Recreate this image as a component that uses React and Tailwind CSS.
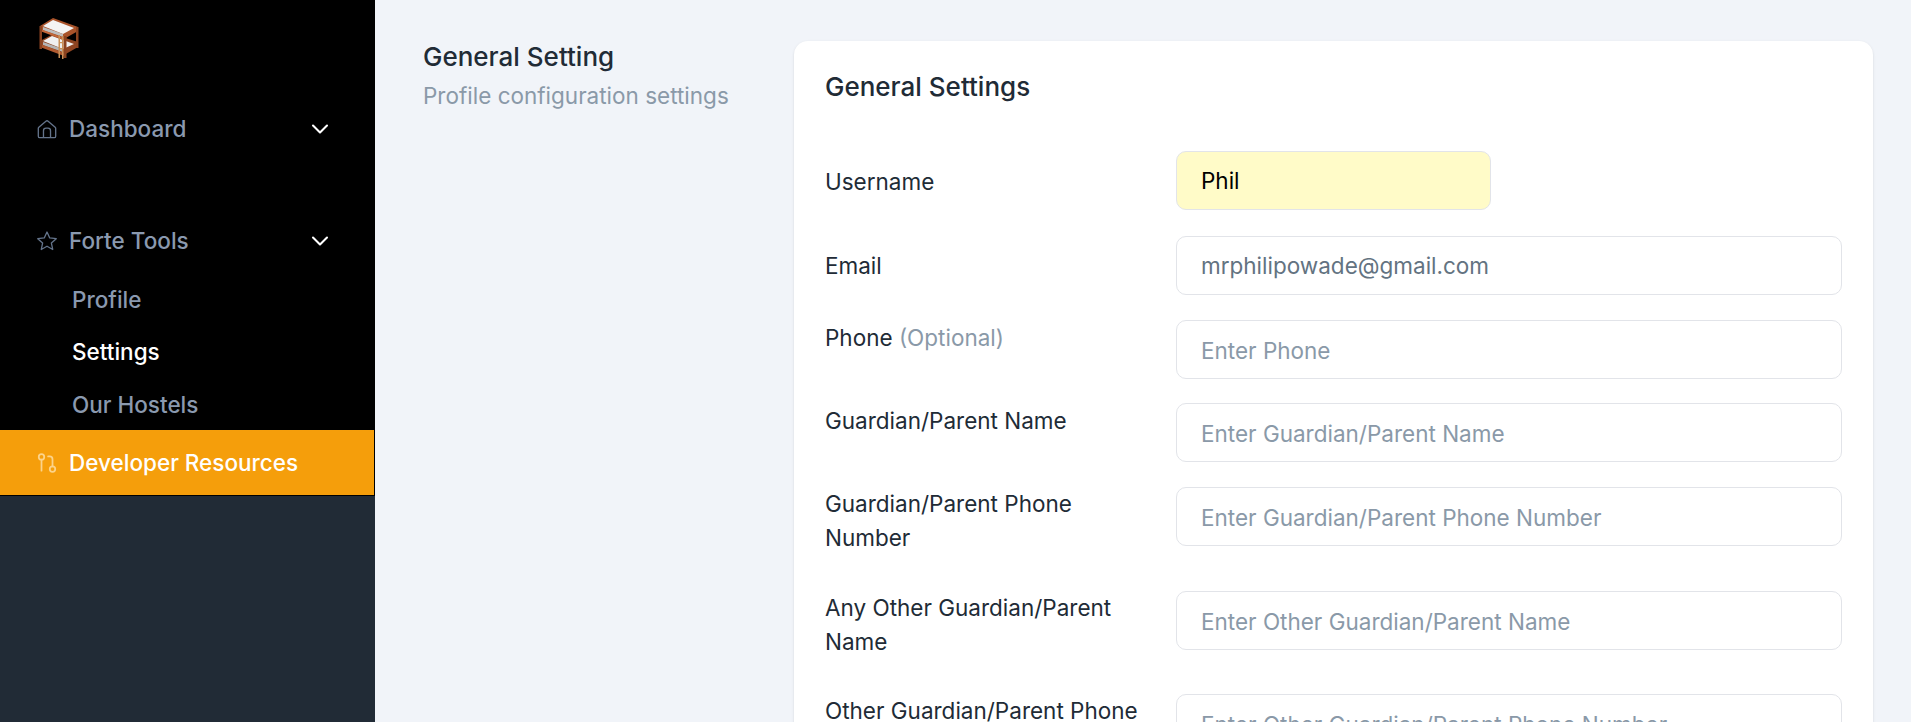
import { ChevronDown } from 'lucide-react'

const font = { fontFamily: 'Inter, sans-serif' }

function HomeIcon() {
  return (
    <svg viewBox="0 0 20 20" className="w-[22px] h-[22px] shrink-0" fill="none" stroke="currentColor" strokeWidth="1.2">
      <path d="M2.600 8.400 9 2.900c.6-.5 1.400-.5 2 0l6.400 5.500c.3.300.5.600.5 1v7.100c0 .8-.6 1.400-1.400 1.400H3.500c-.8 0-1.400-.6-1.400-1.400V9.400c0-.4.200-.7.500-1Z" />
      <path d="M6.800 17.900v-6.400c0-1.300 1-2.300 2.300-2.300h1.800c1.300 0 2.300 1 2.300 2.300v6.400" />
    </svg>
  )
}

function StarIcon() {
  return (
    <svg viewBox="0 0 20 20" className="w-[22px] h-[22px] shrink-0" fill="none" stroke="currentColor" strokeWidth="1.200" strokeLinejoin="round">
      <path d="m10 1.800 2.500 5.400 5.900.7-4.400 4 1.200 5.800L10 14.800l-5.200 2.900L6 11.900l-4.400-4 5.900-.7L10 1.800Z" />
    </svg>
  )
}

function BranchIcon() {
  return (
    <svg viewBox="0 0 20 20" className="w-[22px] h-[22px] shrink-0" fill="none" stroke="currentColor" strokeWidth="1.600" strokeLinecap="round" strokeLinejoin="round">
      <circle cx="5" cy="4.500" r="2.500" />
      <path d="M5 7v10" />
      <circle cx="15" cy="15.500" r="2.500" />
      <path d="M15 13V6.500C15 5.100 14 4 12.500 4H11" />
    </svg>
  )
}

function BunkBed() {
  return (
    <svg viewBox="0 0 48 48" className="w-[48px] h-[48px]">
      {/* back posts and rims */}
      <path d="M4 12 17 4 42 13 42 17 28 25 4 16Z" fill="#a9532a" />
      <path d="M4 27 17 20 42 28 42 33 28 41 4 32Z" fill="#8f4522" />
      {/* mattresses */}
      <path d="M7 12 17 6 38 14 27 20Z" fill="#f4f4f4" />
      <path d="M7 13 27 20 27 23 7 16Z" fill="#bdbdbd" />
      <path d="M7 27 16 22 38 30 27 35Z" fill="#f0f0f0" />
      <path d="M7 28 27 35 27 38 7 31Z" fill="#b5b5b5" />
      {/* front rims */}
      <path d="M4 15 28 24 28 26 4 17Z" fill="#c4683a" />
      <path d="M4 30 28 39 28 42 4 33Z" fill="#b05a30" />
      {/* posts */}
      <path d="M3.500 12H6V35H3.500ZM40 13H42.500V34H40ZM27.500 22H30.500V44H27.500Z" fill="#8b4320" />
      {/* ladder */}
      <path d="M22.500 21H24V44H22.500ZM26 22H27.500V45H26ZM22.500 28H27V29.200H22.500ZM22.500 34H27V35.200H22.500Z" fill="#c99058" />
    </svg>
  )
}

function Field({ label, optional, value, placeholder, short, center, pt = '', mb }) {
  return (
    <div className={`flex ${center ? 'items-center' : 'items-start'} ${mb}`}>
      <label className={`w-[351px] shrink-0 ${pt} pr-[30px] text-[22.500px] leading-[34px] text-[#212b36]`}>
        {label} {optional && <span className="text-[#8a99a8]">{optional}</span>}
      </label>
      <input
        readOnly
        value={value}
        placeholder={placeholder}
        className={`${short ? 'w-[315px] bg-[#fffbc8] text-black' : 'w-[666px] bg-white text-[#637381]'} ${placeholder ? 'pt-[2px]' : ''} h-[59px] px-[24px] rounded-[10px] border border-[#e2e4e9] text-[22.500px] outline-none placeholder:text-[#8a99a8]`}
      />
    </div>
  )
}

export default function App() {
  return (
    <div className="flex h-screen overflow-hidden bg-[#f1f4f9]" style={font}>
      <aside className="w-[375px] shrink-0 bg-[#212b36] flex flex-col">
        <div className="bg-black h-[430px] pt-[14px]">
          <div className="pl-[36px] h-[48px]"><BunkBed /></div>
          <div className="mt-[47px] flex items-center justify-between pl-[36px] pr-[41px] h-[40px] text-[#8a99af] text-[22.500px]">
            <span className="flex items-center gap-[11px] font-medium"><span className="text-[#64748b]"><HomeIcon /></span>Dashboard</span>
            <ChevronDown strokeWidth={1.8} className="w-[28px] h-[28px] text-white" />
          </div>
          <div className="mt-[72px] flex items-center justify-between pl-[36px] pr-[41px] h-[40px] text-[#8a99af] text-[22.500px]">
            <span className="flex items-center gap-[11px] font-medium"><span className="text-[#64748b]"><StarIcon /></span>Forte Tools</span>
            <ChevronDown strokeWidth={1.8} className="w-[28px] h-[28px] text-white" />
          </div>
          <ul className="mt-[13px] pl-[72px] text-[22.500px] font-medium text-[#8a99af]">
            <li className="h-[52px] flex items-center">Profile</li>
            <li className="h-[52px] flex items-center text-white">Settings</li>
            <li className="h-[53px] flex items-center">Our Hostels</li>
          </ul>
        </div>
        <div className="h-[66px] bg-[#f59e0b] border-b border-black border-r flex items-center gap-[11px] pl-[36px] text-white text-[22.500px] font-medium">
          <span className="text-[#fcd38a]"><BranchIcon /></span>
          Developer Resources
        </div>
      </aside>
      <main className="flex-1 flex items-start pt-[41px] pl-[48px] pr-[39px]">
        <div className="w-[371px] shrink-0">
          <h2 className="text-[26px] leading-[32px] font-medium text-[#212b36]">General Setting</h2>
          <p className="mt-[7px] text-[22.500px] leading-[32px] text-[#8a99a8]">Profile configuration settings</p>
        </div>
        <section className="flex-1 bg-white rounded-t-[14px] shadow-sm pt-[28px] px-[31px]">
          <h3 className="text-[26px] leading-[36px] font-medium text-[#212b36] mb-[46px]">General Settings</h3>
          <Field label="Username" value="Phil" short center pt="pt-[2px]" mb="mb-[26px]" />
          <Field label="Email" value="mrphilipowade@gmail.com" center pt="pt-[1px]" mb="mb-[25px]" />
          <Field label="Phone" optional="(Optional)" placeholder="Enter Phone" pt="pt-[1px]" mb="mb-[24px]" />
          <Field label="Guardian/Parent Name" placeholder="Enter Guardian/Parent Name" pt="pt-[1px]" mb="mb-[25px]" />
          <Field label="Guardian/Parent Phone Number" placeholder="Enter Guardian/Parent Phone Number" mb="mb-[36px]" />
          <Field label="Any Other Guardian/Parent Name" placeholder="Enter Other Guardian/Parent Name" mb="mb-[35px]" />
          <Field label="Other Guardian/Parent Phone Number" placeholder="Enter Other Guardian/Parent Phone Number" mb="mb-[36px]" />
        </section>
      </main>
    </div>
  )
}
